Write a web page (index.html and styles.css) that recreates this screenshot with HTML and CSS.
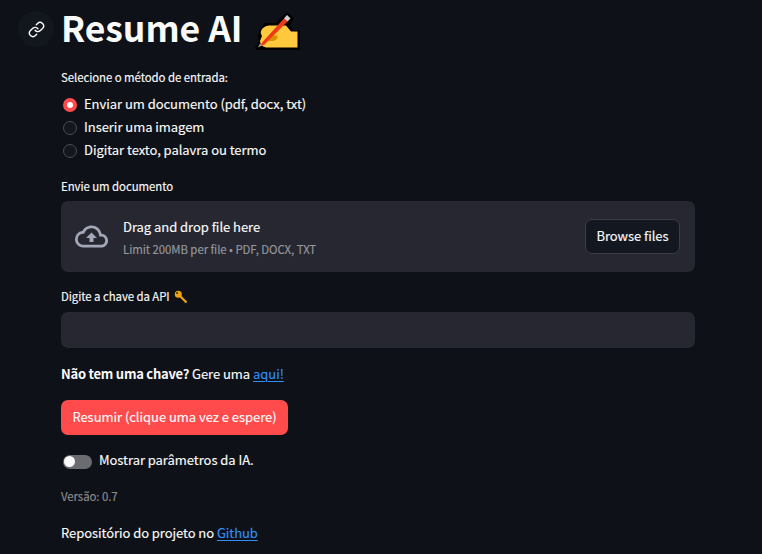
FILE: index.html
```
<!DOCTYPE html>
<html lang="pt-BR">
<head>
<meta charset="utf-8">
<title>Resume AI</title>
<link rel="stylesheet" href="styles.css">
</head>
<body>
<main class="app">
  <header class="title-row">
    <a class="anchor" href="#" aria-label="Link">
      <svg width="17" height="17" viewBox="0 0 24 24" fill="none" stroke="#fafafa" stroke-width="2" stroke-linecap="round" stroke-linejoin="round"><path d="M10 13a5 5 0 0 0 7.54.54l3-3a5 5 0 0 0-7.07-7.07l-1.72 1.71"/><path d="M14 11a5 5 0 0 0-7.54-.54l-3 3a5 5 0 0 0 7.07 7.07l1.71-1.71"/></svg>
    </a>
    <h1>Resume AI</h1>
    <svg class="hand" width="46" height="39" viewBox="0 0 46 39">
      <path d="M0 36 L4 29 L3 24 L5 17 L10 11 H21 L32 0 L39 6 L35 13 L38 18 H45 V38 H2Z" fill="#000"/>
      <path d="M6 22 Q5 19 8 16 Q11 13 15 13.5 H31 L36 19.5 H42.5 V35.5 H11 Q5 34 5 29 L7 24Z" fill="#ffc83d"/>
      <path d="M13 27 L18 23.5 H22.5 Q23 28 18 29 H12Z" fill="#d69500"/>
      <path d="M5 34.5 L7.5 30 L29 6.5 L32.5 9.5 L9.5 32.5Z" fill="#f03a17"/>
      <path d="M29 6.5 L32 3 L35.5 6.5 L32.5 9.5Z" fill="#d2d2d2"/>
      <path d="M3 35.5 L5 31.5 L7 33.5Z" fill="#9b9b9b"/>
    </svg>
  </header>

  <section class="method">
    <div class="label method-label"><span>Selecione o método de entrada:</span></div>
    <div class="option"><i class="radio checked"></i><span>Enviar um documento (pdf, docx, txt)</span></div>
    <div class="option"><i class="radio"></i><span>Inserir uma imagem</span></div>
    <div class="option"><i class="radio"></i><span>Digitar texto, palavra ou termo</span></div>
  </section>

  <section class="upload">
    <div class="label"><span>Envie um documento</span></div>
    <div class="dropzone">
      <svg class="cloud" width="33" height="33" viewBox="0 0 24 24" fill="#a3a8b8"><path d="M19.35 10.04A7.49 7.49 0 0 0 12 4C9.11 4 6.6 5.64 5.35 8.04A5.994 5.994 0 0 0 0 14c0 3.31 2.69 6 6 6h13c2.76 0 5-2.24 5-5 0-2.64-2.05-4.78-4.65-4.96zM19 18H6c-2.21 0-4-1.79-4-4 0-2.05 1.53-3.76 3.56-3.97l1.07-.11.5-.95A5.469 5.469 0 0 1 12 6c2.62 0 4.88 1.86 5.39 4.43l.3 1.5 1.53.11A2.98 2.98 0 0 1 22 15c0 1.65-1.35 3-3 3zM8 13h2.55v3h2.9v-3H16l-4-4z"/></svg>
      <div class="drop-text">
        <div class="drop-title">Drag and drop file here</div>
        <div class="hint">Limit 200MB per file • PDF, DOCX, TXT</div>
      </div>
      <button class="browse">Browse files</button>
    </div>
  </section>

  <section class="key">
    <div class="label"><span>Digite a chave da API</span>
      <svg class="key-icon" width="14" height="14" viewBox="0 0 14 14"><path d="M5.5 5.5 L12.5 12.5" stroke="#f0a30a" stroke-width="2.2"/><circle cx="4.3" cy="4.3" r="3.5" fill="#f0a30a"/><circle cx="3.1" cy="3.1" r="1" fill="#33240a"/></svg>
    </div>
    <input class="field" type="text" aria-label="Digite a chave da API">
  </section>

  <p class="note"><b>Não tem uma chave?</b> Gere uma <a href="#">aqui!</a></p>
  <button class="primary">Resumir (clique uma vez e espere)</button>
  <div class="toggle-row"><i class="toggle"></i><span>Mostrar parâmetros da IA.</span></div>
  <p class="version">Versão: 0.7</p>
  <p class="repo">Repositório do projeto no <a href="#">Github</a></p>
</main>
</body>
</html>
```
FILE: styles.css
```
* { box-sizing: border-box; }
body {
  margin: 0;
  height: 554px;
  overflow: hidden;
  background: #0e1117;
  color: #fafafa;
  font: 13px/23px "Noto Sans CJK JP", "Open Sans", sans-serif;
  letter-spacing: -0.04px;
  white-space: nowrap;
  -webkit-text-stroke: 0.15px;
}
p, h1 { margin: 0; }
a { color: #318ef5; text-decoration: underline; text-underline-offset: 2px; }
button, input { font: inherit; color: inherit; letter-spacing: inherit; }
.app { width: 634px; margin-left: 61px; }

.title-row { display: flex; height: 67px; margin-left: -43px; }
.anchor {
  display: flex;
  align-items: center;
  justify-content: center;
  width: 36px;
  height: 36px;
  margin-top: 11px;
  border-radius: 50%;
  background: #12171e;
}
h1 { width: 195px; padding-left: 7px; font-size: 35.5px; line-height: 54px; font-weight: 700; letter-spacing: -0.05px; -webkit-text-stroke: 0; }
.hand { margin: 12px 0 0 6px; }

.label { display: flex; align-items: center; height: 20px; font-size: 11.4px; line-height: 20px; letter-spacing: -0.06px; }
.method { height: 110px; }
.method-label { margin-bottom: 5px; }
.option { display: flex; align-items: center; height: 23px; }
.radio {
  width: 14px;
  height: 14px;
  margin: 2px 7px 0 2px;
  border: 1px solid #4b4d53;
  border-radius: 50%;
  background: #131720;
}
.radio.checked { border: 4px solid #ff4b4b; background: #fff; }

.upload { height: 110px; }
.upload .label { height: 24px; padding-bottom: 6px; }
.dropzone {
  display: flex;
  align-items: center;
  height: 71px;
  padding: 0 15px 0 14px;
  border-radius: 7px;
  background: #262730;
}
.drop-text { margin-left: 15px; padding-top: 3px; }
.drop-title { line-height: 22px; }
.hint { font-size: 11.4px; line-height: 22px; color: #96979c; letter-spacing: -0.06px; }
.browse {
  width: 95px;
  height: 35px;
  margin-left: auto;
  padding: 0 0 2px;
  border: 1px solid #3b3e46;
  border-radius: 7px;
  background: #131720;
}

.key .label { height: 25px; padding-bottom: 7px; }
.key-icon { margin: 2px 0 0 4px; }
.field { display: block; width: 634px; height: 36px; border: 0; border-radius: 7px; background: #262730; }
.note { margin-top: 14px; }
.note b { letter-spacing: -0.24px; -webkit-text-stroke: 0; }
.primary {
  display: block;
  width: 227px;
  height: 35px;
  margin-top: 15px;
  padding: 0 0 2px;
  border: 0;
  border-radius: 7px;
  background: #ff4b4b;
}
.toggle-row { display: flex; align-items: center; height: 23px; margin-top: 13px; }
.toggle {
  display: flex;
  align-items: center;
  width: 29px;
  height: 14px;
  margin: 4px 7px 0 2px;
  padding-left: 1px;
  border-radius: 7px;
  background: #6b6c70;
}
.toggle::before { content: ""; width: 11px; height: 11px; border-radius: 50%; background: #fafafa; }
.version { margin-top: 14px; font-size: 11.4px; color: #8b8c90; letter-spacing: -0.06px; }
.repo { margin-top: 13px; letter-spacing: -0.06px; }
```
